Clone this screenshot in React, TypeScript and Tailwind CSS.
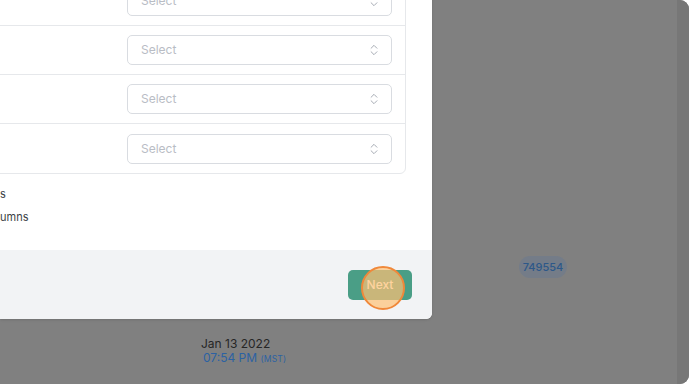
import { ChevronsUpDown } from "lucide-react";

const rows = [0, 1, 2, 3];

const SelectBox = () => (
  <div className="w-[265px] h-[30px] rounded-[5px] border border-[#d9dce1] bg-white pl-[13px] pr-[10px] flex items-center justify-between">
    <span className="text-[12px] text-[#b9bdc5]">Select</span>
    <ChevronsUpDown size={14} strokeWidth={1.5} className="text-[#9aa0a9]" />
  </div>
);

export default function App() {
  return (
    <div className="w-[689px] h-[384px] bg-white font-['Inter',sans-serif]">
      <div className="relative w-full h-full overflow-hidden rounded-r-[9px] bg-[#808080] flex">
        {/* page behind the overlay */}
        <div className="flex-1 flex flex-col pt-[253px]">
          <div className="pl-[519px]">
            <span className="inline-flex items-center justify-center w-[48px] h-[22px] rounded-full bg-[#747c88] text-[11px] font-medium text-[#2d5889]">
              749554
            </span>
          </div>
          <div className="pl-[201px] mt-[58px] flex flex-col">
            <span className="text-[12px] leading-[15px] text-[#262626]">Jan 13 2022</span>
            <span className="pl-[2px] text-[12px] leading-[14px] text-[#2c62a3]">
              07:54 PM <span className="text-[8.5px] tracking-wide">(MST)</span>
            </span>
            <span className="mt-[15px] text-[12px] leading-[15px] text-[#262626]">Jan 13 2022</span>
          </div>
        </div>
        <div className="w-[12px] bg-[#777777]" />

        {/* modal */}
        <div className="absolute left-0 bottom-[65px] w-[432px] bg-white rounded-br-[6px] shadow-sm">
          <div className="pr-[26px] pb-[25px]">
            <div className="-ml-[20px] border border-[#e6e8eb] rounded-br-[6px] divide-y divide-[#e6e8eb]">
              {rows.map((r) => (
                <div key={r} className="h-[49px] flex items-center justify-end pr-[13px]">
                  <SelectBox />
                </div>
              ))}
            </div>
            <div className="mt-[12px] flex flex-col gap-[7px] text-[11px] leading-[16px] text-[#3b3f46]">
              <span>s</span>
              <span>umns</span>
            </div>
          </div>
          <div className="h-[69px] bg-[#f2f3f5] rounded-br-[6px] flex items-center justify-end pr-[20px]">
            <button className="relative w-[64px] h-[30px] rounded-[5px] bg-[#4a9e86] text-white text-[12px] font-medium">
              Next
              <span className="absolute left-[13px] top-[-4px] w-[44px] h-[44px] rounded-full border-2 border-[#f0883a] bg-[#ffc075]/70" />
            </button>
          </div>
        </div>
      </div>
    </div>
  );
}
